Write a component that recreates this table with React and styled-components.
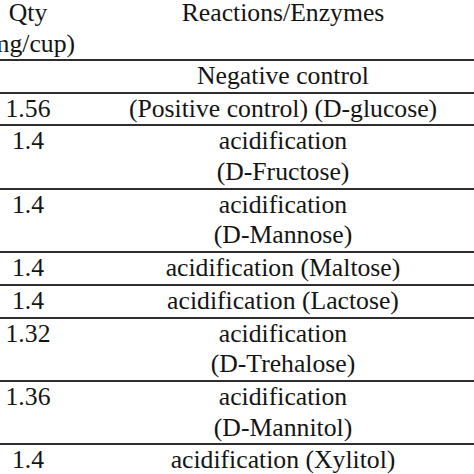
import React from "react";
import styled, { createGlobalStyle } from "styled-components";

const GlobalStyle = createGlobalStyle`
    html, body {
        margin: 0;
        padding: 0;
        background: #ffffff;
        overflow: hidden;
    }
    body {
        width: 474px;
        height: 474px;
    }
`;

const rows = [
    { qty: "", lines: ["Negative control"] },
    { qty: "1.56", lines: ["(Positive control) (D-glucose)"] },
    { qty: "1.4", lines: ["acidification", "(D-Fructose)"] },
    { qty: "1.4", lines: ["acidification", "(D-Mannose)"] },
    { qty: "1.4", lines: ["acidification (Maltose)"] },
    { qty: "1.4", lines: ["acidification (Lactose)"] },
    { qty: "1.32", lines: ["acidification", "(D-Trehalose)"] },
    { qty: "1.36", lines: ["acidification", "(D-Mannitol)"] },
    { qty: "1.4", lines: ["acidification (Xylitol)"] },
];

const App = () => {
    return (
        <Wrapper>
            <GlobalStyle />
            <Table>
                <colgroup>
                    <col style={{ width: 110 }} />
                    <col style={{ width: 400 }} />
                </colgroup>
                <thead>
                    <tr>
                        <HeadCell>
                            Qty
                            <br />
                            (mg/cup)
                        </HeadCell>
                        <HeadCell>Reactions/Enzymes</HeadCell>
                    </tr>
                </thead>
                <tbody>
                    {rows.map((row, i) => (
                        <Row key={i}>
                            <Cell>{row.qty}</Cell>
                            <Cell>
                                {row.lines.map((line, j) => (
                                    <Line key={j}>{line}</Line>
                                ))}
                            </Cell>
                        </Row>
                    ))}
                </tbody>
            </Table>
        </Wrapper>
    );
};

const Wrapper = styled.div`
    width: 474px;
    height: 474px;
    overflow: hidden;
    position: relative;
`;

const Table = styled.table`
    margin-left: -27px;
    margin-top: -3px;
    width: 510px;
    table-layout: fixed;
    border-collapse: collapse;
    font-family: "Liberation Serif", "Times New Roman", serif;
    font-size: 25.7px;
    line-height: 30.7px;
    color: #141414;
`;

const HeadCell = styled.th`
    font-weight: normal;
    text-align: center;
    vertical-align: top;
    padding: 0;
    line-height: 31px;
    white-space: nowrap;
`;

const Row = styled.tr`
    border-top: 2px solid #2e2e2e;
`;

const Cell = styled.td`
    text-align: center;
    vertical-align: top;
    padding: 0;
    white-space: nowrap;
`;

const Line = styled.div`
    height: 30.7px;
`;

export default App;
